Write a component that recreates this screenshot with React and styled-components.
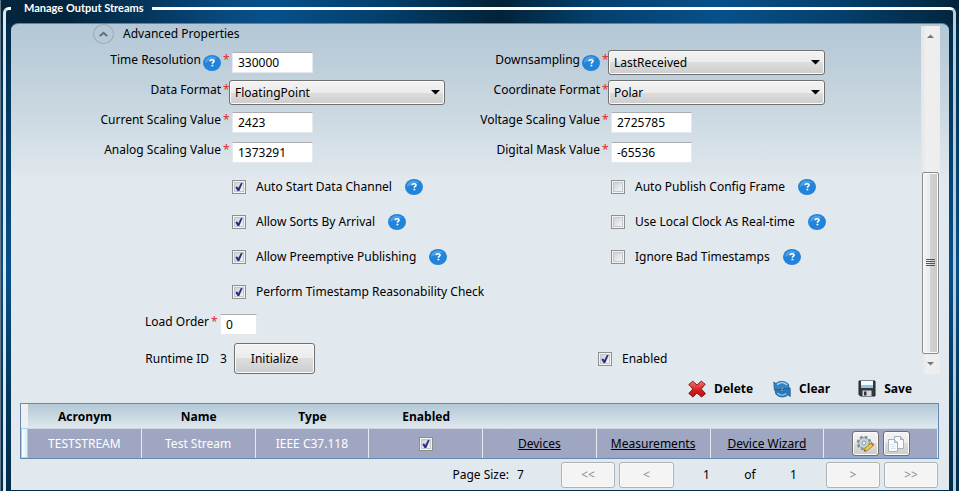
import React, { useState } from "react";
import styled, { createGlobalStyle } from "styled-components";

const GlobalStyle = createGlobalStyle`
  * { box-sizing: border-box; }
  body { margin: 0; }
  body, button, input, select {
    font-family: "Noto Sans", "Open Sans", sans-serif;
    font-size: 12px;
    line-height: 16px;
    color: #000;
  }
`;

const Page = styled.div`
  min-height: 100vh;
  display: flex;
  flex-direction: column;
  border-left: 1px solid #66788a;
  background:
    linear-gradient(90deg, #03263f 0%, #02233a 6%, #084a80 24%, #08508a 28%, #033f6c 40%, #022238 52%, #04406e 62%, #08508a 75%, #043f6b 88%, #02243c 100%) top / 100% 24px no-repeat,
    linear-gradient(#02263f 0, #03375d 90px, #084f88 270px, #03375d 400px, #022b4a 491px);
`;

const GroupBox = styled.fieldset`
  flex: 1;
  min-width: 0;
  margin: 0 3px 0 2px;
  padding: 0 4px 0 5px;
  border: 3px solid #fff;
  border-left-color: #dce8f0;
  border-right-color: #b9cddd;
  border-bottom: 0;
  border-radius: 6px 6px 0 0;
  display: flex;
  flex-direction: column;
`;

const Title = styled.legend`
  padding: 0 8px 0 13px;
  font-family: Lato, "Open Sans", sans-serif;
  font-size: 11px;
  font-weight: 700;
  color: #fff;
`;

const Panel = styled.div`
  flex: 1;
  margin-top: 7px;
  border-top: 1px solid #5b83a3;
  border-radius: 7px 7px 0 0;
  background: linear-gradient(#b3c7d6, #c9d7e0 84px, #e1e8ee 156px);
`;

const ScrollArea = styled.div`
  display: flex;
  padding-right: 9px;
`;

const Form = styled.form`
  flex: 1;
  min-width: 0;
  padding-right: 96px;
`;

const SectionHeader = styled.div`
  display: flex;
  align-items: center;
  gap: 9px;
  height: 20px;
  margin: 0 0 6px 82px;
`;

const ExpandButton = styled.button`
  width: 21px;
  height: 20px;
  padding: 0;
  display: grid;
  place-items: center;
  border: 1px solid #a5a7ab;
  border-radius: 50%;
  background: transparent;
`;

const FieldGrid = styled.div`
  display: grid;
  grid-template-columns: 218px minmax(0, 216fr) 163px minmax(0, 217fr);
  grid-auto-rows: 25px;
  row-gap: 5px;
`;

const FieldLabel = styled.label`
  display: flex;
  justify-content: flex-end;
  align-items: flex-start;
  gap: 2px;
  padding: 2px 1px 0 0;
  white-space: nowrap;
`;

const Required = styled.span`
  width: 5px;
  color: #e02b2b;
`;

const TextInput = styled.input`
  width: ${(p) => p.$width || 81}px;
  height: 21px;
  margin: 2px 3px;
  padding: 0 5px;
  border: 1px solid #e3e9ef;
  border-top-color: #abadb3;
  background: #fff;
`;

const SelectBox = styled.div`
  position: relative;
  svg {
    position: absolute;
    right: 5px;
    top: 10px;
    pointer-events: none;
  }
`;

const Select = styled.select`
  appearance: none;
  width: 100%;
  height: 25px;
  padding: 0 20px 0 5px;
  border: 1px solid #707070;
  border-radius: 3px;
  box-shadow: inset 0 0 0 1px #fafafa;
  background: linear-gradient(#f3f3f3, #ebebeb 50%, #dddddd 50%, #cdcdcd);
`;

const CheckGrid = styled.div`
  display: grid;
  grid-template-columns: 221px minmax(0, 379fr) minmax(0, 214fr);
  grid-auto-rows: 35px;
  margin-top: 4px;
`;

const CheckRow = styled.div`
  grid-column: ${(p) => p.$column || "auto"};
  display: flex;
  align-items: center;
  gap: 13px;
  white-space: nowrap;
`;

const CheckLabel = styled.label`
  display: flex;
  align-items: center;
  gap: 10px;
`;

const tick = `url("data:image/svg+xml,%3Csvg xmlns='http://www.w3.org/2000/svg' width='14' height='14' viewBox='0 0 14 14'%3E%3Cpath d='M3.4 7.400 5 6.200 6.300 8 9 2.700 11 2.300 7.300 11H5.500Z' fill='%232c2f80'/%3E%3C/svg%3E")`;

const Checkbox = styled.input`
  appearance: none;
  flex: none;
  width: 14px;
  height: 14px;
  margin: 0;
  border: 1px solid #8e8f8f;
  box-shadow: inset 0 0 0 1px #f4f4f4, inset 0 0 0 2px #c3c7cd;
  background: linear-gradient(135deg, #cbcfd5 10%, #f6f6f6 85%);
  &:checked {
    background: ${tick} -1px -1px no-repeat, linear-gradient(135deg, #cbcfd5 10%, #f6f6f6 85%);
  }
`;

const HelpButton = styled.button`
  flex: none;
  width: 18px;
  height: 16px;
  padding: 0;
  border: 0;
  background: none;
  margin-top: ${(p) => (p.$inline ? 3 : 0)}px;
  svg { display: block; }
`;

const FooterRow = styled.div`
  display: grid;
  grid-template-columns: minmax(0, 587fr) minmax(0, 227fr);
  align-items: center;
  height: ${(p) => p.$height}px;
  padding-bottom: ${(p) => p.$space || 0}px;
`;

const FooterFields = styled.div`
  display: flex;
  align-items: center;
`;

const FooterLabel = styled.label`
  display: flex;
  justify-content: flex-end;
  gap: 2px;
  width: 206px;
  padding-right: 1px;
  padding-bottom: 4px;
`;

const RuntimeLabel = styled.span`
  width: 198px;
  text-align: right;
`;

const RuntimeValue = styled.output`
  width: 14px;
  margin-left: 11px;
`;

const Button = styled.button`
  width: ${(p) => p.$width}px;
  height: ${(p) => p.$height}px;
  padding: 0;
  display: grid;
  place-items: center;
  border: 1px solid #707070;
  border-radius: 3px;
  box-shadow: inset 0 0 0 1px #fafafa;
  background: linear-gradient(#f3f3f3, #ebebeb 50%, #dddddd 50%, #cdcdcd);
  &:disabled {
    color: #8b8b8b;
    border-color: #adb2b5;
    background: #f4f4f4;
  }
`;

const Scrollbar = styled.div`
  display: flex;
  flex-direction: column;
  width: 19px;
  margin-top: 2px;
  background: linear-gradient(90deg, #e5e5e5, #efefef 30%, #ededed);
`;

const ScrollArrow = styled.button`
  height: 20px;
  padding: 0;
  border: 0;
  display: grid;
  place-items: center;
  background: none;
`;

const ScrollTrack = styled.div`
  flex: 1;
  display: flex;
  flex-direction: column;
  justify-content: flex-end;
`;

const ScrollThumb = styled.div`
  height: 59%;
  margin: 0 1px;
  display: grid;
  place-items: center;
  border: 1px solid #8b8b8b;
  border-radius: 2px;
  box-shadow: inset 0 0 0 1px #fafafa;
  background: linear-gradient(90deg, #f3f3f3, #ebebeb 50%, #d2d2d2 50%, #c8c8c8);
`;

const Actions = styled.div`
  display: flex;
  justify-content: flex-end;
  gap: 20px;
  height: 29px;
  padding-right: 37px;
`;

const ActionButton = styled.button`
  display: flex;
  align-items: center;
  gap: 8px;
  padding: 0;
  border: 0;
  background: none;
  font-family: "Open Sans", "Noto Sans", sans-serif;
  font-weight: 700;
  margin-left: ${(p) => p.$lead || 0}px;
`;

const TableFrame = styled.div`
  margin: 0 10px 0 9px;
  border: 1px solid #6488b3;
`;

const Table = styled.table`
  width: 100%;
  table-layout: fixed;
  border-collapse: separate;
  border-spacing: 0;
`;

const HeadRow = styled.tr`
  height: 24px;
  background: linear-gradient(#b2c8d6, #dfe8ed);
`;

const HeadCell = styled.th`
  width: ${(p) => (p.$selector ? "7px" : "auto")};
  padding: 2px 0 0;
  font-family: "Open Sans", "Noto Sans", sans-serif;
  background: ${(p) => (p.$selector ? "#f0f0f0" : "transparent")};
`;

const BodyRow = styled.tr`
  height: 30px;
  background: #9fa6c1;
`;

const BodyCell = styled.td`
  padding: 0;
  color: #fff;
  text-align: center;
  border-right: 1px solid #e6ebf1;
  border-top: 1px solid #cfd6e2;
`;

const RowSelector = styled.td`
  padding: 0;
  border: 1px solid #99d9f2;
  background: linear-gradient(90deg, #fff, #d6effb);
`;

const CellInner = styled.div`
  display: flex;
  align-items: center;
  justify-content: center;
  gap: 4px;
`;

const CellLink = styled.a`
  color: #000;
  text-decoration: underline;
`;

const Pager = styled.div`
  display: grid;
  grid-template-columns: auto 44px 54px 55px 144px 54px 54px;
  justify-content: end;
  align-items: center;
  column-gap: 4px;
  margin: 3px 11px 2px 9px;
`;

const PageSize = styled.span`
  padding-left: 4px;
`;

const PageCount = styled.div`
  display: flex;
  justify-content: space-between;
  padding: 0 25px;
`;

function HelpIcon() {
  return (
    <svg width="18" height="16" viewBox="0 0 18 16">
      <ellipse cx="9" cy="8" rx="9" ry="8" fill="#2284d8" />
      <path d="M2 8C2 4 5 1.500 9 1.500c2 0 4 1 5 2C10 4 6 6 2 8Z" fill="#62afe9" opacity=".65" />
      <path d="M7.200 6.200C7.200 5.100 8 4.700 9.200 4.700c1.200 0 1.900.5 1.900 1.300 0 1.200-1.700 1.300-1.700 2.700" fill="none" stroke="#fff" strokeWidth="1.600" />
      <rect x="8.500" y="9.800" width="1.800" height="1.500" fill="#fff" />
    </svg>
  );
}

function Help({ topic, inline }) {
  return (
    <HelpButton type="button" aria-label={`Help: ${topic}`} $inline={inline}>
      <HelpIcon />
    </HelpButton>
  );
}

function DeleteIcon() {
  return (
    <svg width="18" height="18" viewBox="0 0 18 18">
      <defs>
        <linearGradient id="red" x2="0" y2="1">
          <stop stopColor="#ef7a74" />
          <stop offset=".55" stopColor="#d6201f" />
          <stop offset="1" stopColor="#b3100f" />
        </linearGradient>
      </defs>
      <path d="M.8 4.500 4.800 1.200 9 5 13.200 1.200 17.200 4.200 13.300 8.900 17.500 13.700 13.500 17 9 13 4.900 17 .8 13.400 4.900 9Z" fill="url(#red)" stroke="#8c1919" strokeLinejoin="round" />
    </svg>
  );
}

function RefreshIcon() {
  return (
    <svg width="18" height="18" viewBox="0 0 18 18">
      <path d="M.8 2 3 3.600C5.500.6 12 .6 15.300 4l1.200 5.300-5.700-.6C10.500 7.300 9 6.900 7.600 7.600L9 9.500 1.300 9.800Z" fill="#3585c4" stroke="#1b5d98" strokeWidth=".8" />
      <path d="M17.300 16.500l-2.400-1.700C12 18 5.500 17.600 2.800 14L1.800 9.300l5.700.5c.4 1.200 1.700 1.500 3 .9L9 8.900l8.200-.7Z" fill="#2b78b9" stroke="#1b5d98" strokeWidth=".8" />
      <path d="M4.300 4.700C7 1.800 11 2.300 14 4.900" fill="none" stroke="#9ed4f2" strokeWidth="1.700" />
      <path d="M4.300 13c2.200 2.800 6.200 2.600 8.900.6" fill="none" stroke="#7dc0eb" strokeWidth="1.400" />
    </svg>
  );
}

function SaveIcon() {
  return (
    <svg width="18" height="17" viewBox="0 0 18 17">
      <path d="M1 1h16v15H2.500L1 14.500Z" fill="#35383d" stroke="#222428" />
      <rect x="3" y="1" width="12" height="7" fill="#f5fbff" />
      <path d="M3 5h12v3H3Z" fill="#88c6ea" />
      <rect x="4.500" y="10.500" width="9" height="5.500" fill="#d7dadd" />
      <rect x="6" y="11.500" width="2.500" height="4" fill="#34373b" />
    </svg>
  );
}

function GearEditIcon() {
  return (
    <svg width="19" height="18" viewBox="0 0 19 18">
      <circle cx="8" cy="8" r="5.800" fill="none" stroke="#83909b" strokeWidth="3.200" strokeDasharray="2.600 1.955" />
      <circle cx="8" cy="8" r="5.300" fill="#cbd4db" stroke="#8996a0" />
      <circle cx="8" cy="8" r="2" fill="#f3f4f5" stroke="#8996a0" />
      <path d="M8.300 16.300 9 13.300 15.700 7.500 18 9.900 11.300 15.600Z" fill="#f2ce31" stroke="#967225" strokeWidth=".8" />
      <path d="M14.600 8.500 15.700 7.500 18 9.900 16.900 10.800Z" fill="#cd5750" />
      <path d="M8.300 16.300l.4-1.600 1.100 1.200Z" fill="#333" />
    </svg>
  );
}

function CopyIcon() {
  return (
    <svg width="18" height="18" viewBox="0 0 18 18" fill="#f8fafb" stroke="#a3b1bc">
      <path d="M7.500 1.500h6l3 3v9h-9Z" />
      <path d="M13.500 1.500v3h3" fill="#cdd9e2" />
      <path d="M1.500 4.500h6l3 3v9h-9Z" />
      <path d="M7.500 4.500v3h3" fill="#cdd9e2" />
      <path d="M3.500 9.500h4M3.500 11.500h5M3.500 13.500h5" stroke="#dbe3e9" />
    </svg>
  );
}

function Chevron() {
  return (
    <svg width="9" height="6" viewBox="0 0 9 6">
      <path d="M0 4.500 4.500.5 9 4.500 7.500 5.800 4.500 3.200 1.500 5.800Z" fill="#6c6e73" />
    </svg>
  );
}

function TextField({ id, label, help, value }) {
  return (
    <>
      <FieldLabel htmlFor={id}>
        {label}
        {help && <Help topic={label} inline />}
        <Required>*</Required>
      </FieldLabel>
      <div>
        <TextInput id={id} defaultValue={value} />
      </div>
    </>
  );
}

function SelectField({ id, label, help, value }) {
  return (
    <>
      <FieldLabel htmlFor={id}>
        {label}
        {help && <Help topic={label} inline />}
        <Required>*</Required>
      </FieldLabel>
      <SelectBox>
        <Select id={id} defaultValue={value}>
          <option>{value}</option>
        </Select>
        <svg width="9" height="5" viewBox="0 0 9 5">
          <path d="M0 0h9L4.500 4.500Z" />
        </svg>
      </SelectBox>
    </>
  );
}

function CheckField({ label, checked, help, column }) {
  const [on, setOn] = useState(Boolean(checked));
  return (
    <CheckRow $column={column}>
      <CheckLabel>
        <Checkbox type="checkbox" checked={on} onChange={(e) => setOn(e.target.checked)} />
        {label}
      </CheckLabel>
      {help && <Help topic={label} />}
    </CheckRow>
  );
}

export default function App() {
  return (
    <Page>
      <GlobalStyle />
      <GroupBox>
        <Title>Manage Output Streams</Title>
        <Panel>
          <ScrollArea>
            <Form onSubmit={(e) => e.preventDefault()}>
              <SectionHeader>
                <ExpandButton type="button" aria-label="Collapse">
                  <Chevron />
                </ExpandButton>
                Advanced Properties
              </SectionHeader>
              <FieldGrid>
                <TextField id="resolution" label="Time Resolution" help value="330000" />
                <SelectField id="downsampling" label="Downsampling" help value="LastReceived" />
                <SelectField id="dataFormat" label="Data Format" value="FloatingPoint" />
                <SelectField id="coordinate" label="Coordinate Format" value="Polar" />
                <TextField id="current" label="Current Scaling Value" value="2423" />
                <TextField id="voltage" label="Voltage Scaling Value" value="2725785" />
                <TextField id="analog" label="Analog Scaling Value" value="1373291" />
                <TextField id="mask" label="Digital Mask Value" value="-65536" />
              </FieldGrid>
              <CheckGrid>
                <CheckField column={2} label="Auto Start Data Channel" checked help />
                <CheckField column={3} label="Auto Publish Config Frame" help />
                <CheckField column={2} label="Allow Sorts By Arrival" checked help />
                <CheckField column={3} label="Use Local Clock As Real-time" help />
                <CheckField column={2} label="Allow Preemptive Publishing" checked help />
                <CheckField column={3} label="Ignore Bad Timestamps" help />
                <CheckField column={2} label="Perform Timestamp Reasonability Check" checked />
              </CheckGrid>
              <FooterRow $height={34} $space={4}>
                <FooterFields>
                  <FooterLabel htmlFor="loadOrder">
                    Load Order <Required>*</Required>
                  </FooterLabel>
                  <TextInput id="loadOrder" defaultValue="0" $width={37} />
                </FooterFields>
              </FooterRow>
              <FooterRow $height={31}>
                <FooterFields>
                  <RuntimeLabel>Runtime ID</RuntimeLabel>
                  <RuntimeValue>3</RuntimeValue>
                  <Button type="button" $width={81} $height={31}>
                    Initialize
                  </Button>
                </FooterFields>
                <CheckField label="Enabled" checked />
              </FooterRow>
            </Form>
            <Scrollbar>
              <ScrollArrow type="button" aria-label="Scroll up">
                <svg width="7" height="4" viewBox="0 0 7 4">
                  <path d="M0 4h7L3.500.5Z" fill="#777" />
                </svg>
              </ScrollArrow>
              <ScrollTrack>
                <ScrollThumb>
                  <svg width="9" height="8" viewBox="0 0 9 8">
                    <path d="M0 .5h9M0 2.500h9M0 4.500h9M0 6.500h9" stroke="#555" />
                  </svg>
                </ScrollThumb>
              </ScrollTrack>
              <ScrollArrow type="button" aria-label="Scroll down">
                <svg width="7" height="4" viewBox="0 0 7 4">
                  <path d="M0 0h7L3.500 3.500Z" fill="#777" />
                </svg>
              </ScrollArrow>
            </Scrollbar>
          </ScrollArea>
          <Actions>
            <ActionButton type="button">
              <DeleteIcon />
              Delete
            </ActionButton>
            <ActionButton type="button">
              <RefreshIcon />
              Clear
            </ActionButton>
            <ActionButton type="button" $lead={8}>
              <SaveIcon />
              Save
            </ActionButton>
          </Actions>
          <TableFrame>
            <Table>
              <thead>
                <HeadRow>
                  <HeadCell $selector />
                  <HeadCell>Acronym</HeadCell>
                  <HeadCell>Name</HeadCell>
                  <HeadCell>Type</HeadCell>
                  <HeadCell>Enabled</HeadCell>
                  <HeadCell />
                  <HeadCell />
                  <HeadCell />
                  <HeadCell />
                </HeadRow>
              </thead>
              <tbody>
                <BodyRow>
                  <RowSelector />
                  <BodyCell>TESTSTREAM</BodyCell>
                  <BodyCell>Test Stream</BodyCell>
                  <BodyCell>IEEE C37.118</BodyCell>
                  <BodyCell>
                    <CellInner>
                      <Checkbox type="checkbox" defaultChecked aria-label="Enabled" />
                    </CellInner>
                  </BodyCell>
                  <BodyCell>
                    <CellLink href="#devices">Devices</CellLink>
                  </BodyCell>
                  <BodyCell>
                    <CellLink href="#measurements">Measurements</CellLink>
                  </BodyCell>
                  <BodyCell>
                    <CellLink href="#wizard">Device Wizard</CellLink>
                  </BodyCell>
                  <BodyCell>
                    <CellInner>
                      <Button type="button" aria-label="Edit configuration" $width={27} $height={25}>
                        <GearEditIcon />
                      </Button>
                      <Button type="button" aria-label="Copy" $width={27} $height={25}>
                        <CopyIcon />
                      </Button>
                    </CellInner>
                  </BodyCell>
                </BodyRow>
              </tbody>
            </Table>
          </TableFrame>
          <Pager>
            <span>Page Size:</span>
            <PageSize>7</PageSize>
            <Button disabled aria-label="First page" $width={54} $height={26}>&lt;&lt;</Button>
            <Button disabled aria-label="Previous page" $width={55} $height={26}>&lt;</Button>
            <PageCount>
              <span>1</span>
              <span>of</span>
              <span>1</span>
            </PageCount>
            <Button disabled aria-label="Next page" $width={54} $height={26}>&gt;</Button>
            <Button disabled aria-label="Last page" $width={54} $height={26}>&gt;&gt;</Button>
          </Pager>
        </Panel>
      </GroupBox>
    </Page>
  );
}
